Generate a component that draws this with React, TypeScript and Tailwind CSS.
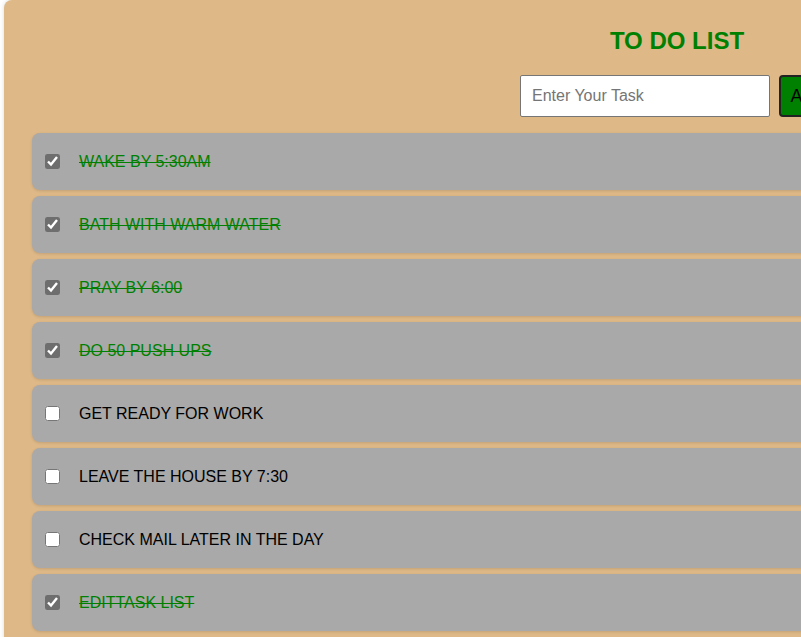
import { useState } from 'react'

type Task = { id: number; text: string; done: boolean }

const initialTasks: Task[] = [
  { id: 1, text: 'WAKE BY 5:30AM', done: true },
  { id: 2, text: 'BATH WITH WARM WATER', done: true },
  { id: 3, text: 'PRAY BY 6:00', done: true },
  { id: 4, text: 'DO 50 PUSH UPS', done: true },
  { id: 5, text: 'GET READY FOR WORK', done: false },
  { id: 6, text: 'LEAVE THE HOUSE BY 7:30', done: false },
  { id: 7, text: 'CHECK MAIL LATER IN THE DAY', done: false },
  { id: 8, text: 'EDITTASK LIST', done: true },
]

export default function App() {
  const [tasks, setTasks] = useState<Task[]>(initialTasks)
  const [draft, setDraft] = useState('')

  const toggle = (id: number) =>
    setTasks(tasks.map((t) => (t.id === id ? { ...t, done: !t.done } : t)))

  const addTask = () => {
    if (!draft.trim()) return
    setTasks([...tasks, { id: Date.now(), text: draft.toUpperCase(), done: false }])
    setDraft('')
  }

  return (
    <div className="w-[801px] h-[637px] overflow-hidden bg-white font-['Liberation_Sans',Arial,sans-serif]">
      <div className="ml-1 w-[1346px] min-h-[700px] bg-[#DEB887] rounded-lg shadow-[0_0_4px_rgba(0,0,0,0.15)] pt-[25px] px-7 pb-6">
        {/* Header */}
        <h1 className="text-center text-2xl leading-8 font-bold text-[#008000]">TO DO LIST</h1>
        <div className="mt-[18px] flex justify-center gap-[9px]">
          <input
            value={draft}
            onChange={(e) => setDraft(e.target.value)}
            placeholder="Enter Your Task"
            className="w-[250px] h-[42px] bg-white border border-[#767676] rounded-[2px] px-[11px] text-base text-black placeholder:text-[#757575] outline-none"
          />
          <button
            onClick={addTask}
            className="w-[55px] h-[42px] bg-[#008000] border-2 border-[#222] rounded-[4px] text-lg text-black"
          >
            Add
          </button>
        </div>

        {/* Tasks */}
        <ul className="mt-4 flex flex-col gap-[6px]">
          {tasks.map((t) => (
            <li
              key={t.id}
              className="h-[57px] bg-[#A9A9A9] rounded-lg shadow-[0_1px_3px_rgba(0,0,0,0.12)] flex items-center pl-[13px]"
            >
              <input
                type="checkbox"
                checked={t.done}
                onChange={() => toggle(t.id)}
                className="w-[15px] h-[15px] m-0 accent-[#6e6e6e]"
              />
              <span
                className={
                  'ml-[19px] text-base ' +
                  (t.done ? 'text-[#008000] line-through' : 'text-black')
                }
              >
                {t.text}
              </span>
            </li>
          ))}
        </ul>
      </div>
    </div>
  )
}
